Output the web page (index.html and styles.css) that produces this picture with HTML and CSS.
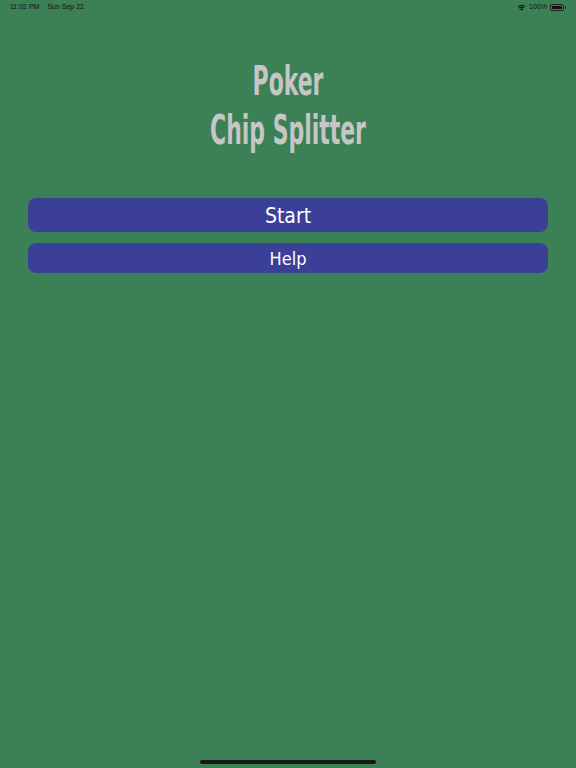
FILE: index.html
```html
<!DOCTYPE html>
<html>
    <head>
        <meta charset="utf-8">
        <title>Poker Chip Splitter</title>
        <link rel="stylesheet" href="styles.css">
    </head>
    <body>
        <div class="screen">
            <div class="statusbar">
                <div class="left">
                    <span>11:02 PM</span>
                    <span>Sun Sep 22</span>
                </div>
                <div class="right">
                    <svg class="wifi" width="9" height="7" viewBox="0 0 10 8">
                        <path d="M5 7.6 L3.4 5.9 A2.3 2.3 0 0 1 6.6 5.9 Z" fill="#111"/>
                        <path d="M1.9 4.4 A4.4 4.4 0 0 1 8.1 4.4 L7.2 5.3 A3.1 3.1 0 0 0 2.8 5.3 Z" fill="#111"/>
                        <path d="M0.3 2.8 A6.6 6.6 0 0 1 9.7 2.8 L8.8 3.7 A5.3 5.3 0 0 0 1.2 3.7 Z" fill="#111"/>
                    </svg>
                    <span>100%</span>
                    <span class="battery"><i></i></span>
                </div>
            </div>

            <h1 class="title">Poker<br>Chip Splitter</h1>

            <div class="menu">
                <a href="" class="btn start">Start</a>
                <a href="" class="btn help">Help</a>
            </div>

            <div class="homebar"></div>
        </div>
    </body>
</html>
```

FILE: styles.css
```css
*{
    margin: 0;
    padding: 0;
    box-sizing: border-box;
}
body{
    background: #3c8156;
}
.screen{
    width: 576px;
    height: 768px;
    position: relative;
    display: flex;
    flex-direction: column;
    background: #3c8156;
}
.statusbar{
    height: 14px;
    padding: 0 10px 0 10px;
    display: flex;
    justify-content: space-between;
    align-items: center;
    font: 500 7px/14px "Liberation Sans", Arial, sans-serif;
    color: #111;
}
.statusbar .left span{
    margin-right: 6px;
}
.statusbar .right{
    display: flex;
    align-items: center;
    gap: 3px;
}
.battery{
    width: 14px;
    height: 7px;
    border: 1px solid #222;
    border-radius: 2px;
    padding: 1px;
    position: relative;
    margin-right: 2px;
}
.battery i{
    display: block;
    height: 100%;
    background: #111;
    border-radius: 1px;
}
.battery::after{
    content: "";
    position: absolute;
    right: -3px;
    top: 1.5px;
    width: 1.5px;
    height: 2.5px;
    background: #333;
}
/* 字体没有DIN Condensed 用压缩代替 */
.title{
    margin-top: 43px;
    text-align: center;
    font: 700 40px/49px "DejaVu Sans Condensed", sans-serif;
    color: #c6c6c6;
    transform: scaleX(0.61);
}
.menu{
    margin-top: 43px;
    padding: 0 28px;
    display: flex;
    flex-direction: column;
    gap: 11px;
}
.btn{
    display: block;
    background: #3b3f98;
    border-radius: 8px;
    color: #fff;
    text-align: center;
    text-decoration: none;
    font-family: "DejaVu Sans Condensed", sans-serif;
}
.start{
    height: 34px;
    font-size: 21px;
    line-height: 36px;
}
.help{
    height: 30px;
    font-size: 18px;
    line-height: 32px;
}
.homebar{
    position: absolute;
    left: 200px;
    bottom: 4px;
    width: 176px;
    height: 4px;
    border-radius: 2px;
    background: #1a1a1a;
}
```
